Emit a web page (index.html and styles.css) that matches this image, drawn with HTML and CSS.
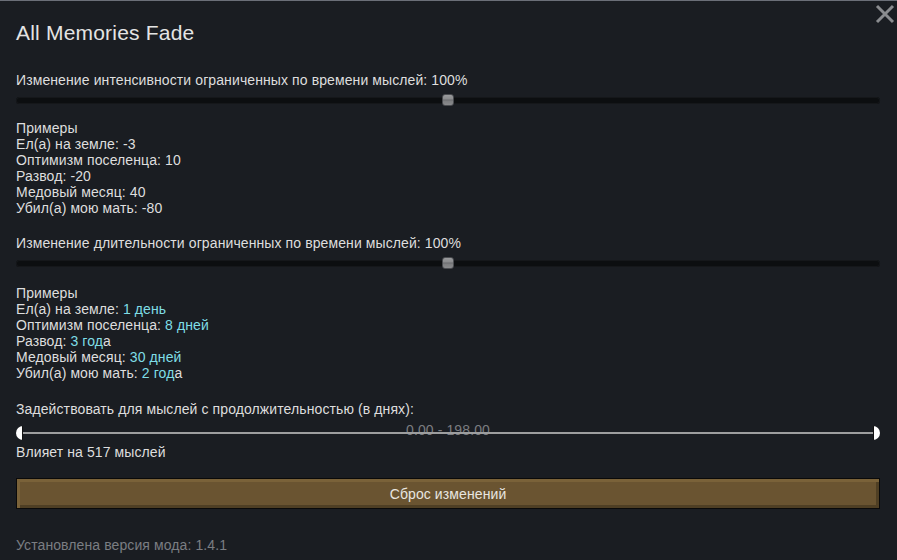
FILE: index.html
```html
<!DOCTYPE html>
<html lang="ru">
<head>
<meta charset="utf-8">
<title>All Memories Fade</title>
<link rel="stylesheet" href="styles.css">
</head>
<body>
<div class="window">
  <button class="close" aria-label="close">
    <svg width="20" height="20" viewBox="0 0 20 20"><path d="M2 2 L18 18 M18 2 L2 18" stroke="#8a8c8f" stroke-width="3" fill="none"/></svg>
  </button>
  <h1 class="title">All Memories Fade</h1>

  <div class="label first">Изменение интенсивности ограниченных по времени мыслей: 100%</div>
  <div class="slider"><div class="track"></div><div class="handle" style="left:50%"></div></div>

  <div class="examples">
    <div>Примеры</div>
    <div>Ел(а) на земле: -3</div>
    <div>Оптимизм поселенца: 10</div>
    <div>Развод: -20</div>
    <div>Медовый месяц: 40</div>
    <div>Убил(а) мою мать: -80</div>
  </div>

  <div class="label second">Изменение длительности ограниченных по времени мыслей: 100%</div>
  <div class="slider"><div class="track"></div><div class="handle" style="left:50%"></div></div>

  <div class="examples">
    <div>Примеры</div>
    <div>Ел(а) на земле: <span class="hl">1 день</span></div>
    <div>Оптимизм поселенца: <span class="hl">8 дней</span></div>
    <div>Развод: <span class="hl">3 год</span>а</div>
    <div>Медовый месяц: <span class="hl">30 дней</span></div>
    <div>Убил(а) мою мать: <span class="hl">2 год</span>а</div>
  </div>

  <div class="label third">Задействовать для мыслей с продолжительностью (в днях):</div>
  <div class="range">
    <span class="range-text">0.00 - 198.00</span>
    <span class="cap left"></span>
    <span class="line"></span>
    <span class="cap right"></span>
  </div>
  <div class="affects">Влияет на 517 мыслей</div>

  <button class="reset">Сброс изменений</button>

  <div class="version">Установлена версия мода: 1.4.1</div>
</div>
</body>
</html>
```
FILE: styles.css
```css
html, body {
  margin: 0;
  padding: 0;
  background: #1a1d22;
}
body {
  font-family: "Liberation Sans", Arial, sans-serif;
  color: #dedede;
  font-size: 14px;
  line-height: 16px;
  letter-spacing: 0.1px;
}
.window {
  position: relative;
  width: 897px;
  height: 559px;
  box-sizing: border-box;
  border-top: 1px solid #6b6f78;
  padding: 0 17px 0 16px;
  display: flex;
  flex-direction: column;
}
.close {
  position: absolute;
  top: 3px;
  right: 2px;
  background: none;
  border: none;
  padding: 0;
  width: 20px;
  height: 20px;
}
.title {
  margin: 21px 0 0;
  font-size: 21px;
  line-height: 22px;
  letter-spacing: 0.2px;
  font-weight: normal;
  color: #e4e4e4;
}
.label.first { margin-top: 28px; }
.label.second { margin-top: 19px; }
.label.third { margin-top: 20px; }
.slider {
  position: relative;
  height: 12px;
  margin-top: 6px;
  display: flex;
  align-items: center;
}
.track {
  flex: 1;
  height: 7px;
  border-radius: 4px;
  background: #0c0e10;
  box-shadow: inset 0 0 0 1px #15171a;
}
.handle {
  position: absolute;
  top: 0;
  width: 12px;
  height: 12px;
  margin-left: -6px;
  border-radius: 3px;
  box-sizing: border-box;
  border: 1px solid #4a4c50;
  background: linear-gradient(#9a9b9d 0, #8a8b8d 40%, #6a6b6e 50%, #7d7e80 60%, #8a8b8d 100%);
}
.slider + .examples { margin-top: 14px; }
.label.second + .slider + .examples { margin-top: 16px; }
.hl { color: #7fdde6; }
.range {
  position: relative;
  margin-top: 9px;
  height: 14px;
  display: flex;
  align-items: center;
}
.range-text {
  position: absolute;
  left: 0;
  right: 0;
  top: -4px;
  text-align: center;
  color: #7a7c80;
  line-height: 16px;
}
.line {
  position: relative;
  flex: 1;
  height: 2px;
  background: #9d9e9f;
}
.cap {
  position: relative;
  width: 7px;
  height: 14px;
  background: #ffffff;
  box-sizing: border-box;
}
.cap.left {
  border-radius: 7px 0 0 7px;
  border-right: 1px solid #111;
}
.cap.right {
  border-radius: 0 7px 7px 0;
  border-left: 1px solid #111;
}
.affects { margin-top: 4px; }
.reset {
  margin-top: 18px;
  height: 31px;
  width: 100%;
  box-sizing: border-box;
  border: 1px solid #0a0a0a;
  background: #6a5431;
  box-shadow: inset 3px 3px 0 #7a6239, inset -3px -3px 0 #4f3f24;
  color: #e8e6e0;
  font-family: "Liberation Sans", Arial, sans-serif;
  font-size: 14px;
  letter-spacing: 0.1px;
  padding: 0;
}
.version {
  margin-top: 28px;
  color: #7a7d82;
}
```
